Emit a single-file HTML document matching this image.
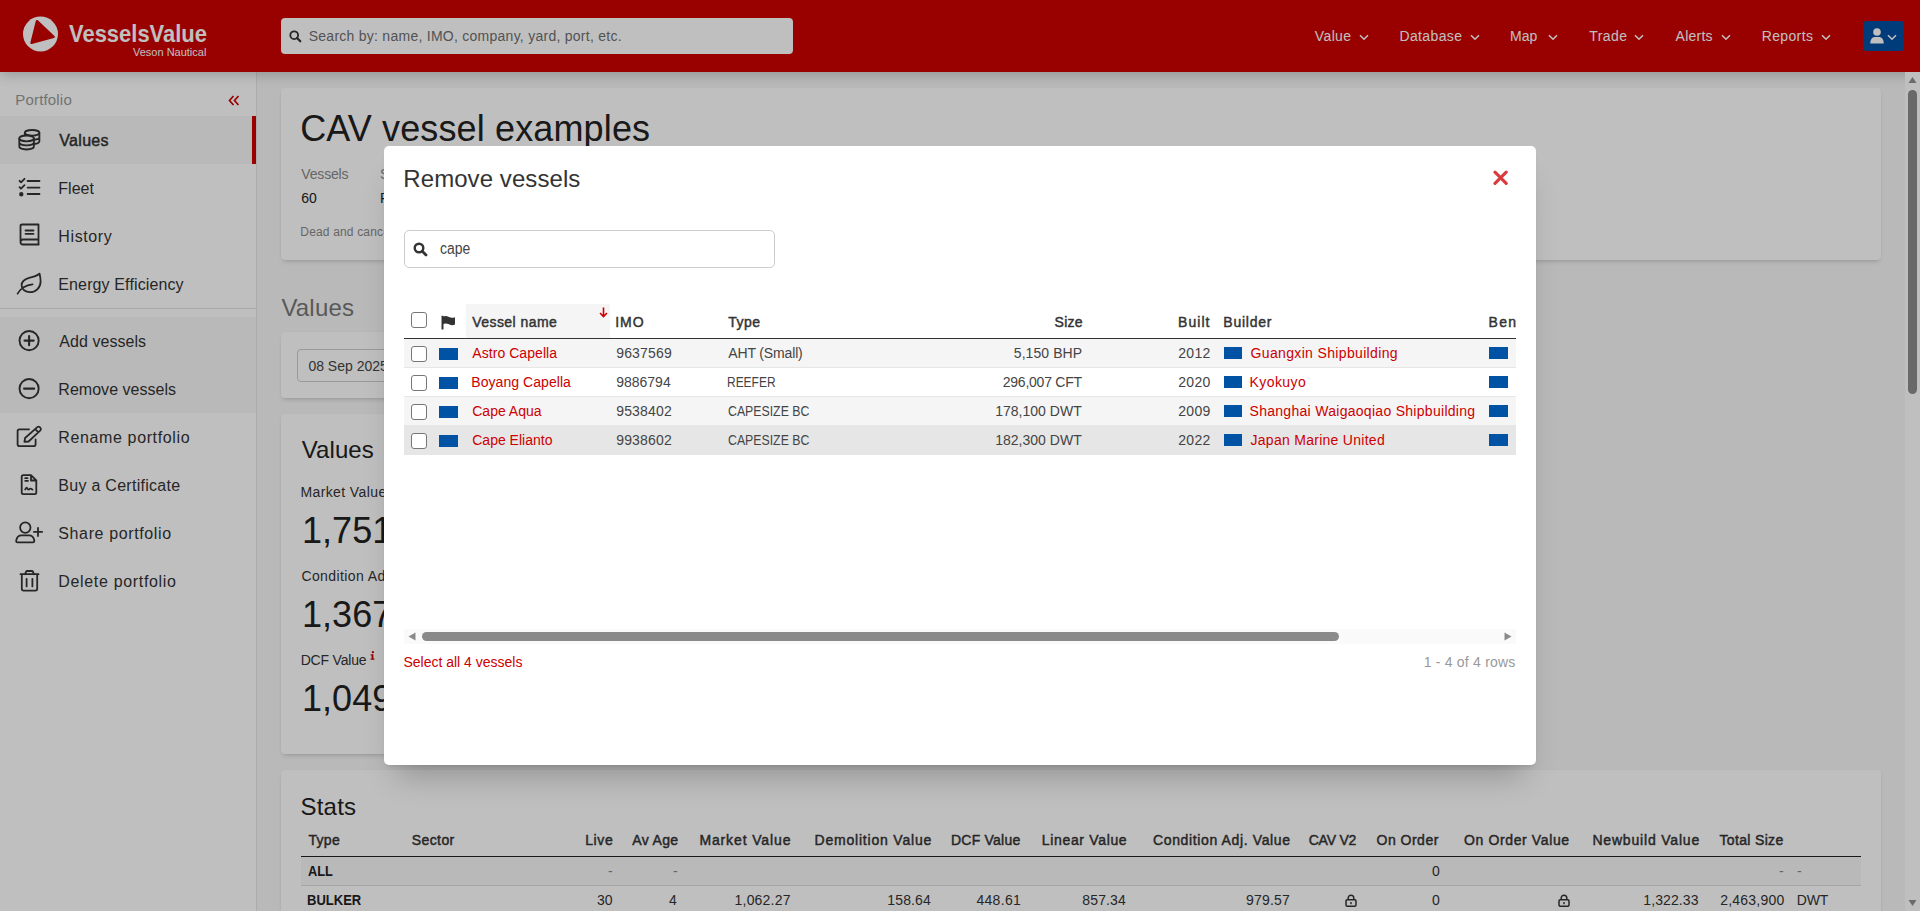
<!DOCTYPE html><html><head><meta charset="utf-8"><title>VesselsValue</title><style>
*{box-sizing:border-box;margin:0;padding:0}
html,body{width:1920px;height:911px;overflow:hidden}
body{font-family:"Liberation Sans",sans-serif;background:#f7f7f7;color:#333;position:relative}
.abs{position:absolute}
.t{position:absolute;white-space:nowrap;line-height:1}
#hdr{position:absolute;left:0;top:0;width:1920px;height:72px;background:#cc0000;box-shadow:0 3px 12px rgba(0,0,0,.2)}
#side{position:absolute;left:0;top:72px;width:257px;height:839px;background:#fff;border-right:1px solid #e6e6e6}
.card{position:absolute;background:#fff;border-radius:4px;box-shadow:0 3px 5px -2px rgba(0,0,0,.2),0 0 2px rgba(0,0,0,.04)}
#overlay{position:absolute;left:0;top:0;width:1920px;height:911px;background:rgba(0,0,0,.25)}
#modal{position:absolute;left:384px;top:146px;width:1152px;height:619px;background:#fff;border-radius:5px;box-shadow:0 22px 30px -12px rgba(0,0,0,.24),0 4px 5px -3px rgba(0,0,0,.12)}
.ico{position:absolute;fill:none;stroke:#333;stroke-width:2;stroke-linecap:round;stroke-linejoin:round}
.svg{position:absolute}
</style></head><body>
<div id="page" style="position:absolute;left:0;top:0;width:1920px;height:911px">
<div class="card" style="left:281px;top:88px;width:1600px;height:172px"></div>
<div class="t" style="left:300.20px;top:111px;font-size:36px;color:#222;letter-spacing:0.133px;">CAV vessel examples</div>
<div class="t" style="left:301.30px;top:167px;font-size:14px;color:#888;letter-spacing:-0.167px;">Vessels</div>
<div class="t" style="left:301.30px;top:191px;font-size:14px;color:#222;">60</div>
<div class="t" style="left:380.00px;top:167px;font-size:14px;color:#888;">Status</div>
<div class="t" style="left:380.00px;top:191px;font-size:14px;color:#222;">Private</div>
<div class="t" style="left:300.30px;top:226px;font-size:12px;color:#888;letter-spacing:0.17px;">Dead and cancelled vessels are not included</div>
<div class="t" style="left:281.40px;top:296px;font-size:24px;color:#777;letter-spacing:0.200px;">Values</div>
<div class="card" style="left:281px;top:332px;width:1200px;height:66px"></div>
<div class="abs" style="left:297px;top:349px;width:200px;height:33px;border:1px solid #ccc;border-radius:4px;background:#fff"></div>
<div class="t" style="left:308.40px;top:359px;font-size:14px;color:#444;">08 Sep 2025</div>
<div class="card" style="left:281px;top:414px;width:1200px;height:340px"></div>
<div class="t" style="left:301.80px;top:438px;font-size:24px;color:#222;letter-spacing:0.080px;">Values</div>
<div class="t" style="left:300.40px;top:485px;font-size:14px;color:#333;letter-spacing:0.4px;">Market Value</div>
<div class="t" style="left:302.10px;top:513px;font-size:36px;color:#222;">1,751</div>
<div class="t" style="left:301.40px;top:569px;font-size:14px;color:#333;letter-spacing:0.4px;">Condition Adj. Value</div>
<div class="t" style="left:302.10px;top:597px;font-size:36px;color:#222;">1,367</div>
<div class="t" style="left:300.70px;top:653px;font-size:14px;color:#333;letter-spacing:-0.188px;">DCF Value</div>
<div class="t" style="left:302.10px;top:681px;font-size:36px;color:#222;">1,049</div>
<svg class="svg" style="left:370px;top:651px" width="5" height="9" viewBox="0 0 5 9"><circle cx="2.9" cy="1.2" r="1.15" fill="#cc0000"/><path d="M0.6 3.3 H3.4 V7.6 H4.4 V8.7 H0.6 V7.6 H1.6 V4.4 H0.6 Z" fill="#cc0000"/></svg>
<div class="card" style="left:281px;top:770px;width:1600px;height:200px"></div>
<div class="t" style="left:300.40px;top:795px;font-size:24px;color:#222;letter-spacing:0.250px;">Stats</div>
<div class="abs" style="left:301px;top:856px;width:1560px;height:1px;background:#222"></div>
<div class="abs" style="left:301px;top:857px;width:1560px;height:28px;background:#f7f7f7"></div>
<div class="abs" style="left:301px;top:885px;width:1560px;height:1px;background:#dcdcdc"></div>
<div class="t" style="left:308.40px;top:833px;font-size:14px;color:#333;-webkit-text-stroke:0.45px currentColor;letter-spacing:0.333px;">Type</div>
<div class="t" style="left:411.80px;top:833px;font-size:14px;color:#333;-webkit-text-stroke:0.45px currentColor;letter-spacing:0.400px;">Sector</div>
<div class="t" style="right:1306.73px;top:833px;font-size:14px;color:#333;-webkit-text-stroke:0.45px currentColor;letter-spacing:0.600px;">Live</div>
<div class="t" style="right:1241.51px;top:833px;font-size:14px;color:#333;-webkit-text-stroke:0.45px currentColor;letter-spacing:0.360px;">Av Age</div>
<div class="t" style="right:1128.71px;top:833px;font-size:14px;color:#333;-webkit-text-stroke:0.45px currentColor;letter-spacing:0.873px;">Market Value</div>
<div class="t" style="right:987.93px;top:833px;font-size:14px;color:#333;-webkit-text-stroke:0.45px currentColor;letter-spacing:0.800px;">Demolition Value</div>
<div class="t" style="right:899.55px;top:833px;font-size:14px;color:#333;-webkit-text-stroke:0.45px currentColor;letter-spacing:0.225px;">DCF Value</div>
<div class="t" style="right:792.69px;top:833px;font-size:14px;color:#333;-webkit-text-stroke:0.45px currentColor;letter-spacing:0.664px;">Linear Value</div>
<div class="t" style="right:629.34px;top:833px;font-size:14px;color:#333;-webkit-text-stroke:0.45px currentColor;letter-spacing:0.632px;">Condition Adj. Value</div>
<div class="t" style="right:563.84px;top:833px;font-size:14px;color:#333;-webkit-text-stroke:0.45px currentColor;letter-spacing:-0.220px;">CAV V2</div>
<div class="t" style="right:481.19px;top:833px;font-size:14px;color:#333;-webkit-text-stroke:0.45px currentColor;letter-spacing:0.486px;">On Order</div>
<div class="t" style="right:350.30px;top:833px;font-size:14px;color:#333;-webkit-text-stroke:0.45px currentColor;letter-spacing:0.615px;">On Order Value</div>
<div class="t" style="right:219.97px;top:833px;font-size:14px;color:#333;-webkit-text-stroke:0.45px currentColor;letter-spacing:0.815px;">Newbuild Value</div>
<div class="t" style="right:136.48px;top:833px;font-size:14px;color:#333;-webkit-text-stroke:0.45px currentColor;letter-spacing:0.333px;">Total Size</div>
<div class="t" style="left:308.40px;top:864px;font-size:14px;color:#222;font-weight:700;transform:scaleX(0.9111);transform-origin:0 0;">ALL</div>
<div class="t" style="right:1307.34px;top:864px;font-size:14px;color:#888;">-</div>
<div class="t" style="right:1242.34px;top:864px;font-size:14px;color:#888;">-</div>
<div class="t" style="right:136.34px;top:864px;font-size:14px;color:#888;">-</div>
<div class="t" style="right:118.34px;top:864px;font-size:14px;color:#888;">-</div>
<div class="t" style="right:480.22px;top:864px;font-size:14px;color:#333;">0</div>
<div class="t" style="left:307.47px;top:893px;font-size:14px;color:#222;font-weight:700;transform:scaleX(0.9298);transform-origin:0 0;">BULKER</div>
<div class="t" style="right:1307.44px;top:893px;font-size:14px;color:#333;">30</div>
<div class="t" style="right:1243.22px;top:893px;font-size:14px;color:#333;">4</div>
<div class="t" style="right:1129.33px;top:893px;font-size:14px;color:#333;letter-spacing:0.200px;">1,062.27</div>
<div class="t" style="right:989.06px;top:893px;font-size:14px;color:#333;letter-spacing:0.140px;">158.64</div>
<div class="t" style="right:898.88px;top:893px;font-size:14px;color:#333;letter-spacing:0.320px;">448.61</div>
<div class="t" style="right:794.06px;top:893px;font-size:14px;color:#333;letter-spacing:0.140px;">857.34</div>
<div class="t" style="right:630.00px;top:893px;font-size:14px;color:#333;letter-spacing:0.200px;">979.57</div>
<div class="t" style="right:480.22px;top:893px;font-size:14px;color:#333;">0</div>
<div class="t" style="right:221.43px;top:893px;font-size:14px;color:#333;letter-spacing:0.100px;">1,322.33</div>
<div class="t" style="right:135.53px;top:893px;font-size:14px;color:#333;letter-spacing:0.225px;">2,463,900</div>
<div class="t" style="left:1796.80px;top:893px;font-size:14px;color:#333;letter-spacing:-0.200px;">DWT</div>
<svg class="svg" style="left:1345px;top:894px" width="12" height="13" viewBox="0 0 12 13"><rect x="1" y="5.8" width="10" height="6.4" rx="1.2" fill="none" stroke="#333" stroke-width="1.5"/><path d="M3.2 5.8 V4 C3.2 2.3 4.4 1.2 6 1.2 C7.6 1.2 8.8 2.3 8.8 4 V5.8" fill="none" stroke="#333" stroke-width="1.5"/><rect x="5.3" y="8" width="1.4" height="2.2" fill="#333"/></svg>
<svg class="svg" style="left:1558px;top:894px" width="12" height="13" viewBox="0 0 12 13"><rect x="1" y="5.8" width="10" height="6.4" rx="1.2" fill="none" stroke="#333" stroke-width="1.5"/><path d="M3.2 5.8 V4 C3.2 2.3 4.4 1.2 6 1.2 C7.6 1.2 8.8 2.3 8.8 4 V5.8" fill="none" stroke="#333" stroke-width="1.5"/><rect x="5.3" y="8" width="1.4" height="2.2" fill="#333"/></svg>
<div id="side"></div>
<div class="t" style="left:15.30px;top:92px;font-size:15px;color:#999;letter-spacing:0.175px;">Portfolio</div>
<svg class="svg" style="left:228px;top:95px" width="12" height="11" viewBox="0 0 12 11"><path d="M5.5 1 L1.5 5.5 L5.5 10 M10.5 1 L6.5 5.5 L10.5 10" fill="none" stroke="#cc0000" stroke-width="1.7"/></svg>
<div class="abs" style="left:0px;top:116px;width:252px;height:48px;background:#f7f7f7"></div>
<div class="abs" style="left:252px;top:116px;width:4px;height:48px;background:#cc0000"></div>
<div class="abs" style="left:0px;top:308px;width:256px;height:1px;background:#e2e2e2"></div>
<div class="abs" style="left:0px;top:317px;width:256px;height:96px;background:#f7f7f7"></div>
<div class="t" style="left:59.30px;top:133px;font-size:16px;color:#333;-webkit-text-stroke:0.45px currentColor;letter-spacing:0.300px;">Values</div>
<div class="t" style="left:58.30px;top:181px;font-size:16px;color:#333;">Fleet</div>
<div class="t" style="left:58.30px;top:229px;font-size:16px;color:#333;letter-spacing:0.617px;">History</div>
<div class="t" style="left:58.30px;top:277px;font-size:16px;color:#333;letter-spacing:0.125px;">Energy Efficiency</div>
<div class="t" style="left:59.30px;top:334px;font-size:16px;color:#333;letter-spacing:0.050px;">Add vessels</div>
<div class="t" style="left:58.30px;top:382px;font-size:16px;color:#333;letter-spacing:0.031px;">Remove vessels</div>
<div class="t" style="left:58.30px;top:430px;font-size:16px;color:#333;letter-spacing:0.627px;">Rename portfolio</div>
<div class="t" style="left:58.30px;top:478px;font-size:16px;color:#333;letter-spacing:0.281px;">Buy a Certificate</div>
<div class="t" style="left:58.30px;top:526px;font-size:16px;color:#333;letter-spacing:0.621px;">Share portfolio</div>
<div class="t" style="left:58.30px;top:574px;font-size:16px;color:#333;letter-spacing:0.667px;">Delete portfolio</div>
<svg class="ico" style="left:0;top:0;stroke-width:1.8" width="60" height="620" viewBox="0 0 60 620"><ellipse cx="32.1" cy="132.8" rx="7.3" ry="2.8"/><path d="M24.8 132.8 V137 M39.4 132.8 V141.3 A7.3 2.8 0 0 1 33.9 144 M39.4 137 A7.3 2.8 0 0 1 33.9 139.8"/><path d="M19.3 138.4 V146.6 A7.3 2.9 0 0 0 33.9 146.6 V138.4 Z" fill="#f7f7f7" stroke="none"/><ellipse cx="26.6" cy="138.4" rx="7.3" ry="2.9" fill="#f7f7f7"/><path d="M19.3 138.4 V146.6 A7.3 2.9 0 0 0 33.9 146.6 V138.4 M19.3 142.5 A7.3 2.9 0 0 0 33.9 142.5"/><path d="M19.5 180.8 L21 182.3 L24.5 178.8 M19.5 187.2 L21 188.7 L24.5 185.2 M27.6 181 H39.5 M27.6 187.6 H39.5 M27.6 194 H39.5"/><circle cx="21.3" cy="194.2" r="1.3" fill="#333"/><path d="M20.5 241.5 V226 C20.5 225 21.2 224.5 22.2 224.5 H38.5 V239.5 H23 C21.5 239.5 20.5 240.5 20.5 242 C20.5 243.5 21.5 244.5 23 244.5 H38.7 M25.5 230.5 H33.5 M25.5 233.8 H33.5 M38.5 239.5 V244.5"/><path d="M39.5 273.6 C37.5 276 33 276.6 29 277.8 C24 279.3 21.6 282 21.6 285.2 C21.6 289.5 25.5 292.2 30 292.2 C36 292.2 40.6 287.5 40.6 281.5 C40.6 278 40 275.5 39.5 273.6 Z M17.6 293.6 C20.2 289 25 285 32.5 284.3"/><circle cx="29.1" cy="340.6" r="9.6" stroke-width="1.9"/><path d="M29.1 336 V345.2 M24.5 340.6 H33.7" stroke-width="2.1"/><circle cx="29.1" cy="388.6" r="9.6" stroke-width="1.9"/><path d="M24 388.6 H34.2" stroke-width="2.1"/><path d="M29 429.4 H19.5 C18.4 429.4 17.6 430.2 17.6 431.3 V444.3 C17.6 445.4 18.4 446.2 19.5 446.2 H33.7 C34.8 446.2 35.6 445.4 35.6 444.3 V439.5 M24.4 441.8 L25.1 438 L37.3 427.2 C38 426.5 39 426.5 39.7 427.2 L40.4 427.9 C41.1 428.6 41.1 429.6 40.4 430.3 L28.6 441.5 Z M35.2 429.2 L38.2 432.2"/><path d="M31 475.2 H23.3 C22.4 475.2 21.7 475.9 21.7 476.8 V492.6 C21.7 493.5 22.4 494.2 23.3 494.2 H34.7 C35.6 494.2 36.3 493.5 36.3 492.6 V480.5 Z M31 475.2 V480.5 H36.3 M25.2 478.2 H27.5 M25.2 480.8 H28 M25.2 489.5 C26 487.5 26.8 487.2 27.6 488.8 C28.2 490 28.9 489.8 29.6 489 C30.3 488.3 31.2 488.6 32.5 489.6"/><circle cx="25.3" cy="527.6" r="5.2"/><path d="M17.8 542.3 C16.5 542.3 16 541.6 16.2 540.5 C16.8 537.3 18.8 535.3 21.5 535.3 H29 C31.7 535.3 33.7 537.3 34.3 540.5 C34.5 541.6 34 542.3 32.7 542.3 Z M38 527.8 V536 M33.9 531.9 H42.1"/><path d="M20.5 574.2 H38.5 M25 574.2 L26 571.8 C26.2 571.3 26.6 571 27.2 571 H31.8 C32.4 571 32.8 571.3 33 571.8 L34 574.2 M21.8 574.2 V588.8 C21.8 589.9 22.6 590.6 23.6 590.6 H35.4 C36.4 590.6 37.2 589.9 37.2 588.8 V574.2 M26.6 578.8 V586.4 M32.4 578.8 V586.4"/></svg>
<div id="hdr"></div>
<svg class="svg" style="left:23px;top:16px" width="36" height="36" viewBox="0 0 36 36"><circle cx="17.5" cy="18" r="17.5" fill="#fff"/><path d="M14 5.2 L30.6 20.8 L8.6 26.8 Z" fill="#cc0000" stroke="#cc0000" stroke-width="2.5" stroke-linejoin="round"/></svg>
<div class="t" style="left:69px;top:22px;font-size:24px;font-weight:700;color:#fff;transform:scaleX(0.915);transform-origin:0 0">VesselsValue</div>
<div class="t" style="left:133.00px;top:47px;font-size:11px;color:#fff;">Veson Nautical</div>
<div class="abs" style="left:281px;top:18px;width:512px;height:36px;background:#fff;border-radius:4px"></div>
<svg class="svg" style="left:289px;top:30px" width="13" height="13" viewBox="0 0 13 13"><circle cx="5.2" cy="5.2" r="3.9" fill="none" stroke="#333" stroke-width="1.8"/><path d="M8 8 L11.3 11.3" stroke="#333" stroke-width="2.2" stroke-linecap="round"/></svg>
<div class="t" style="left:308.70px;top:29px;font-size:14px;color:#6f6f6f;letter-spacing:0.261px;">Search by: name, IMO, company, yard, port, etc.</div>
<div class="t" style="left:1314.80px;top:29px;font-size:14px;color:#fff;letter-spacing:0.375px;">Value</div>
<div class="t" style="left:1399.50px;top:29px;font-size:14px;color:#fff;letter-spacing:0.357px;">Database</div>
<div class="t" style="left:1510.00px;top:29px;font-size:14px;color:#fff;">Map</div>
<div class="t" style="left:1589.20px;top:29px;font-size:14px;color:#fff;letter-spacing:0.450px;">Trade</div>
<div class="t" style="left:1675.60px;top:29px;font-size:14px;color:#fff;letter-spacing:0.240px;">Alerts</div>
<div class="t" style="left:1761.70px;top:29px;font-size:14px;color:#fff;letter-spacing:0.367px;">Reports</div>
<svg class="svg" style="left:1359px;top:34px" width="10" height="7" viewBox="0 0 10 7"><path d="M1 1.2 L5 5.2 L9 1.2" fill="none" stroke="#fff" stroke-width="1.6"/></svg>
<svg class="svg" style="left:1470px;top:34px" width="10" height="7" viewBox="0 0 10 7"><path d="M1 1.2 L5 5.2 L9 1.2" fill="none" stroke="#fff" stroke-width="1.6"/></svg>
<svg class="svg" style="left:1548px;top:34px" width="10" height="7" viewBox="0 0 10 7"><path d="M1 1.2 L5 5.2 L9 1.2" fill="none" stroke="#fff" stroke-width="1.6"/></svg>
<svg class="svg" style="left:1634px;top:34px" width="10" height="7" viewBox="0 0 10 7"><path d="M1 1.2 L5 5.2 L9 1.2" fill="none" stroke="#fff" stroke-width="1.6"/></svg>
<svg class="svg" style="left:1721px;top:34px" width="10" height="7" viewBox="0 0 10 7"><path d="M1 1.2 L5 5.2 L9 1.2" fill="none" stroke="#fff" stroke-width="1.6"/></svg>
<svg class="svg" style="left:1821px;top:34px" width="10" height="7" viewBox="0 0 10 7"><path d="M1 1.2 L5 5.2 L9 1.2" fill="none" stroke="#fff" stroke-width="1.6"/></svg>
<div class="abs" style="left:1863px;top:21px;width:41px;height:30px;background:#004fa3;border-radius:4px"></div>
<svg class="svg" style="left:1870px;top:28px" width="15" height="16" viewBox="0 0 15 16"><circle cx="7" cy="4" r="3.8" fill="#fff"/><path d="M0.3 15.5 C0.3 11 2.5 9 5 9 L9 9 C11.5 9 13.7 11 13.7 15.5 Z" fill="#fff"/></svg>
<svg class="svg" style="left:1887px;top:34px" width="10" height="7" viewBox="0 0 10 7"><path d="M1 1.2 L5 5.2 L9 1.2" fill="none" stroke="#fff" stroke-width="1.6"/></svg>
<div class="abs" style="left:1905px;top:72px;width:15px;height:839px;background:#fff"></div>
<svg class="svg" style="left:1908px;top:76px" width="9" height="8" viewBox="0 0 9 8"><path d="M4.5 1 L8.5 7 L0.5 7 Z" fill="#8f8f8f"/></svg>
<div class="abs" style="left:1908px;top:90px;width:9px;height:304px;background:#8c8c8c;border-radius:5px"></div>
<svg class="svg" style="left:1908px;top:899px" width="9" height="8" viewBox="0 0 9 8"><path d="M0.5 1 L8.5 1 L4.5 7 Z" fill="#8f8f8f"/></svg>
</div>
<div id="overlay"></div>
<div id="modal"></div>
<div style="position:absolute;left:0;top:0;width:1920px;height:911px">
<div class="t" style="left:403.30px;top:167px;font-size:24px;color:#333;letter-spacing:0.077px;">Remove vessels</div>
<svg class="svg" style="left:1493px;top:170px" width="16" height="16" viewBox="0 0 16 16"><path d="M2 2.2 L13.2 13.4 M13.2 2.2 L2 13.4" stroke="#da3a3d" stroke-width="3.1" stroke-linecap="round"/></svg>
<div class="abs" style="left:404px;top:230px;width:371px;height:38px;border:1px solid #ccc;border-radius:5px"></div>
<svg class="svg" style="left:413px;top:242px" width="15" height="15" viewBox="0 0 15 15"><circle cx="6" cy="6" r="4.3" fill="none" stroke="#333" stroke-width="2.4"/><path d="M9.3 9.3 L13 13" stroke="#333" stroke-width="2.8" stroke-linecap="round"/></svg>
<div class="t" style="left:439.60px;top:241px;font-size:16px;color:#444;transform:scaleX(0.8706);transform-origin:0 0;">cape</div>
<div class="abs" style="left:466px;top:304px;width:144px;height:34px;background:#f5f5f5"></div>
<div class="abs" style="left:404px;top:338px;width:1112px;height:1px;background:#333"></div>
<div class="abs" style="left:411px;top:312px;width:16px;height:16px;border:1px solid #777;border-radius:3px;background:#fff"></div>
<svg class="svg" style="left:441px;top:315px" width="15" height="15" viewBox="0 0 15 15"><path d="M1.5 0.8 V14.5" stroke="#333" stroke-width="2"/><path d="M2 1.5 C4 0.5 6 0.8 8 2 C10 3 12 3 14 2.2 V9.5 C12 10.5 10 10.3 8 9.3 C6 8.3 4 8 2 9 Z" fill="#333"/></svg>
<svg class="svg" style="left:599px;top:307px" width="9" height="11" viewBox="0 0 9 11"><path d="M4.5 0.5 V9.5 M1 6 L4.5 9.5 L8 6" fill="none" stroke="#cc0000" stroke-width="1.6"/></svg>
<div class="t" style="left:472.25px;top:315px;font-size:14px;color:#333;-webkit-text-stroke:0.45px currentColor;letter-spacing:0.440px;">Vessel name</div>
<div class="t" style="left:615.20px;top:315px;font-size:14px;color:#333;-webkit-text-stroke:0.45px currentColor;letter-spacing:0.950px;">IMO</div>
<div class="t" style="left:728.30px;top:315px;font-size:14px;color:#333;-webkit-text-stroke:0.45px currentColor;letter-spacing:0.433px;">Type</div>
<div class="t" style="right:837.07px;top:315px;font-size:14px;color:#333;-webkit-text-stroke:0.45px currentColor;letter-spacing:0.300px;">Size</div>
<div class="t" style="right:709.52px;top:315px;font-size:14px;color:#333;-webkit-text-stroke:0.45px currentColor;letter-spacing:1.050px;">Built</div>
<div class="t" style="left:1223.30px;top:315px;font-size:14px;color:#333;-webkit-text-stroke:0.45px currentColor;letter-spacing:0.750px;">Builder</div>
<div class="t" style="left:1488.50px;top:315px;font-size:14px;color:#333;-webkit-text-stroke:0.45px currentColor;letter-spacing:1.350px;">Ben</div>
<div class="abs" style="left:404px;top:339px;width:1112px;height:29px;background:#f5f5f5"></div>
<div class="abs" style="left:404px;top:367px;width:1112px;height:1px;background:#e6e6e6"></div>
<div class="abs" style="left:411px;top:346px;width:16px;height:16px;border:1px solid #777;border-radius:3px;background:#fff"></div>
<div class="abs" style="left:439px;top:348px;width:19px;height:12px;background:#0052a5"></div>
<div class="t" style="left:472.25px;top:346px;font-size:14px;color:#cc0000;letter-spacing:0.062px;">Astro Capella</div>
<div class="t" style="left:616.20px;top:346px;font-size:14px;color:#444;letter-spacing:0.167px;">9637569</div>
<div class="t" style="left:728.30px;top:346px;font-size:14px;color:#444;letter-spacing:-0.150px;">AHT (Small)</div>
<div class="t" style="right:837.82px;top:346px;font-size:14px;color:#444;letter-spacing:0.075px;">5,150 BHP</div>
<div class="t" style="right:709.34px;top:346px;font-size:14px;color:#444;letter-spacing:0.333px;">2012</div>
<div class="abs" style="left:1224px;top:347px;width:18px;height:12px;background:#0052a5"></div>
<div class="t" style="left:1250.50px;top:346px;font-size:14px;color:#cc0000;letter-spacing:0.350px;">Guangxin Shipbuilding</div>
<div class="abs" style="left:1489px;top:347px;width:19px;height:12px;background:#0052a5"></div>
<div class="abs" style="left:404px;top:368px;width:1112px;height:29px;background:#fff"></div>
<div class="abs" style="left:404px;top:396px;width:1112px;height:1px;background:#e6e6e6"></div>
<div class="abs" style="left:411px;top:375px;width:16px;height:16px;border:1px solid #777;border-radius:3px;background:#fff"></div>
<div class="abs" style="left:439px;top:377px;width:19px;height:12px;background:#0052a5"></div>
<div class="t" style="left:471.25px;top:375px;font-size:14px;color:#cc0000;letter-spacing:0.058px;">Boyang Capella</div>
<div class="t" style="left:616.20px;top:375px;font-size:14px;color:#444;">9886794</div>
<div class="t" style="left:727.45px;top:375px;font-size:14px;color:#444;transform:scaleX(0.8545);transform-origin:0 0;">REEFER</div>
<div class="t" style="right:838.17px;top:375px;font-size:14px;color:#444;letter-spacing:-0.240px;">296,007 CFT</div>
<div class="t" style="right:709.34px;top:375px;font-size:14px;color:#444;letter-spacing:0.333px;">2020</div>
<div class="abs" style="left:1224px;top:376px;width:18px;height:12px;background:#0052a5"></div>
<div class="t" style="left:1249.50px;top:375px;font-size:14px;color:#cc0000;letter-spacing:0.417px;">Kyokuyo</div>
<div class="abs" style="left:1489px;top:376px;width:19px;height:12px;background:#0052a5"></div>
<div class="abs" style="left:404px;top:397px;width:1112px;height:29px;background:#f5f5f5"></div>
<div class="abs" style="left:404px;top:425px;width:1112px;height:1px;background:#e6e6e6"></div>
<div class="abs" style="left:411px;top:404px;width:16px;height:16px;border:1px solid #777;border-radius:3px;background:#fff"></div>
<div class="abs" style="left:439px;top:406px;width:19px;height:12px;background:#0052a5"></div>
<div class="t" style="left:472.25px;top:404px;font-size:14px;color:#cc0000;">Cape Aqua</div>
<div class="t" style="left:616.20px;top:404px;font-size:14px;color:#444;letter-spacing:0.167px;">9538402</div>
<div class="t" style="left:728.30px;top:404px;font-size:14px;color:#444;transform:scaleX(0.8785);transform-origin:0 0;">CAPESIZE BC</div>
<div class="t" style="right:838.24px;top:404px;font-size:14px;color:#444;letter-spacing:0.020px;">178,100 DWT</div>
<div class="t" style="right:709.34px;top:404px;font-size:14px;color:#444;letter-spacing:0.333px;">2009</div>
<div class="abs" style="left:1224px;top:405px;width:18px;height:12px;background:#0052a5"></div>
<div class="t" style="left:1249.50px;top:404px;font-size:14px;color:#cc0000;letter-spacing:0.290px;">Shanghai Waigaoqiao Shipbuilding</div>
<div class="abs" style="left:1489px;top:405px;width:19px;height:12px;background:#0052a5"></div>
<div class="abs" style="left:404px;top:426px;width:1112px;height:29px;background:#e6e6e6"></div>
<div class="abs" style="left:411px;top:433px;width:16px;height:16px;border:1px solid #777;border-radius:3px;background:#fff"></div>
<div class="abs" style="left:439px;top:435px;width:19px;height:12px;background:#0052a5"></div>
<div class="t" style="left:472.25px;top:433px;font-size:14px;color:#cc0000;">Cape Elianto</div>
<div class="t" style="left:616.20px;top:433px;font-size:14px;color:#444;letter-spacing:0.167px;">9938602</div>
<div class="t" style="left:728.30px;top:433px;font-size:14px;color:#444;transform:scaleX(0.8785);transform-origin:0 0;">CAPESIZE BC</div>
<div class="t" style="right:838.24px;top:433px;font-size:14px;color:#444;letter-spacing:0.020px;">182,300 DWT</div>
<div class="t" style="right:709.34px;top:433px;font-size:14px;color:#444;letter-spacing:0.333px;">2022</div>
<div class="abs" style="left:1224px;top:434px;width:18px;height:12px;background:#0052a5"></div>
<div class="t" style="left:1250.50px;top:433px;font-size:14px;color:#cc0000;letter-spacing:0.278px;">Japan Marine United</div>
<div class="abs" style="left:1489px;top:434px;width:19px;height:12px;background:#0052a5"></div>
<div class="abs" style="left:404px;top:629px;width:1112px;height:15px;background:#fafafa"></div>
<svg class="svg" style="left:408px;top:632px" width="8" height="9" viewBox="0 0 8 9"><path d="M7.5 0.5 V8.5 L0.5 4.5 Z" fill="#8a8a8a"/></svg>
<div class="abs" style="left:422px;top:632px;width:917px;height:9px;background:#8a8a8a;border-radius:5px"></div>
<svg class="svg" style="left:1504px;top:632px" width="8" height="9" viewBox="0 0 8 9"><path d="M0.5 0.5 V8.5 L7.5 4.5 Z" fill="#8a8a8a"/></svg>
<div class="t" style="left:403.40px;top:655px;font-size:14px;color:#cc0000;">Select all 4 vessels</div>
<div class="t" style="right:404.41px;top:655px;font-size:14px;color:#999;letter-spacing:0.214px;">1 - 4 of 4 rows</div>
</div>
</body></html>
